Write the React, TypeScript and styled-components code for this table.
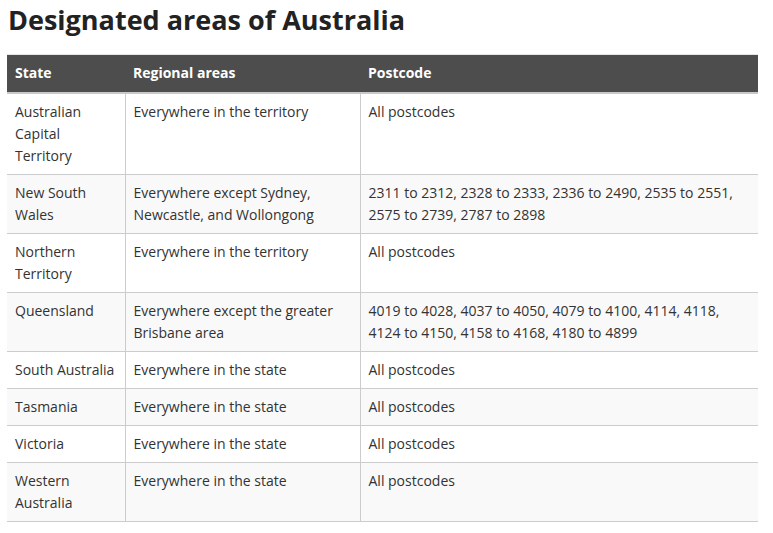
import React from "react";
import styled, { createGlobalStyle } from "styled-components";

const Global = createGlobalStyle`
  html, body { margin: 0; padding: 0; background: #ffffff; }
  body { font-family: "Open Sans", "Liberation Sans", Arial, sans-serif; color: #333333; }
`;

const Page = styled.div`
  padding: 4px 15px 0 7px;
`;

const Title = styled.h1`
  margin: 0 0 18px 1px;
  font-size: 27px;
  line-height: 32px;
  font-weight: 700;
  color: #222222;
`;

const Table = styled.table`
  width: 751px;
  border-collapse: collapse;
  table-layout: fixed;
  font-size: 14px;
  line-height: 22px;
`;

const Th = styled.th`
  background: #4d4d4d;
  color: #ffffff;
  font-weight: 700;
  text-align: left;
  padding: 7px 8px 8px;
  border-top: 1px solid #e6e6e6;
  border-bottom: 2px solid #c9c9c9;
`;

const Row = styled.tr<{ $shade: boolean }>`
  background: ${(p) => (p.$shade ? "#f9f9f9" : "#ffffff")};
`;

const Td = styled.td`
  vertical-align: top;
  padding: 7px 8px 7px;
  border-bottom: 1px solid #cccccc;
  & + & { border-left: 1px solid #cccccc; }
`;

const rows: [string, string, string][] = [
  ["Australian Capital Territory", "Everywhere in the territory", "All postcodes"],
  [
    "New South Wales",
    "Everywhere except Sydney, Newcastle, and Wollongong",
    "2311 to 2312, 2328 to 2333, 2336 to 2490, 2535 to 2551, 2575 to 2739, 2787 to 2898",
  ],
  ["Northern Territory", "Everywhere in the territory", "All postcodes"],
  [
    "Queensland",
    "Everywhere except the greater Brisbane area",
    "4019 to 4028, 4037 to 4050, 4079 to 4100, 4114, 4118, 4124 to 4150, 4158 to 4168, 4180 to 4899",
  ],
  ["South Australia", "Everywhere in the state", "All postcodes"],
  ["Tasmania", "Everywhere in the state", "All postcodes"],
  ["Victoria", "Everywhere in the state", "All postcodes"],
  ["Western Australia", "Everywhere in the state", "All postcodes"],
];

export default function App() {
  return (
    <Page>
      <Global />
      <Title>Designated areas of Australia</Title>
      <Table>
        <colgroup>
          <col style={{ width: 118 }} />
          <col style={{ width: 235 }} />
          <col />
        </colgroup>
        <thead>
          <tr>
            <Th>State</Th>
            <Th>Regional areas</Th>
            <Th>Postcode</Th>
          </tr>
        </thead>
        <tbody>
          {rows.map((r, i) => (
            <Row key={r[0]} $shade={i % 2 === 1}>
              <Td>{r[0]}</Td>
              <Td>{r[1]}</Td>
              <Td>{r[2]}</Td>
            </Row>
          ))}
        </tbody>
      </Table>
    </Page>
  );
}
